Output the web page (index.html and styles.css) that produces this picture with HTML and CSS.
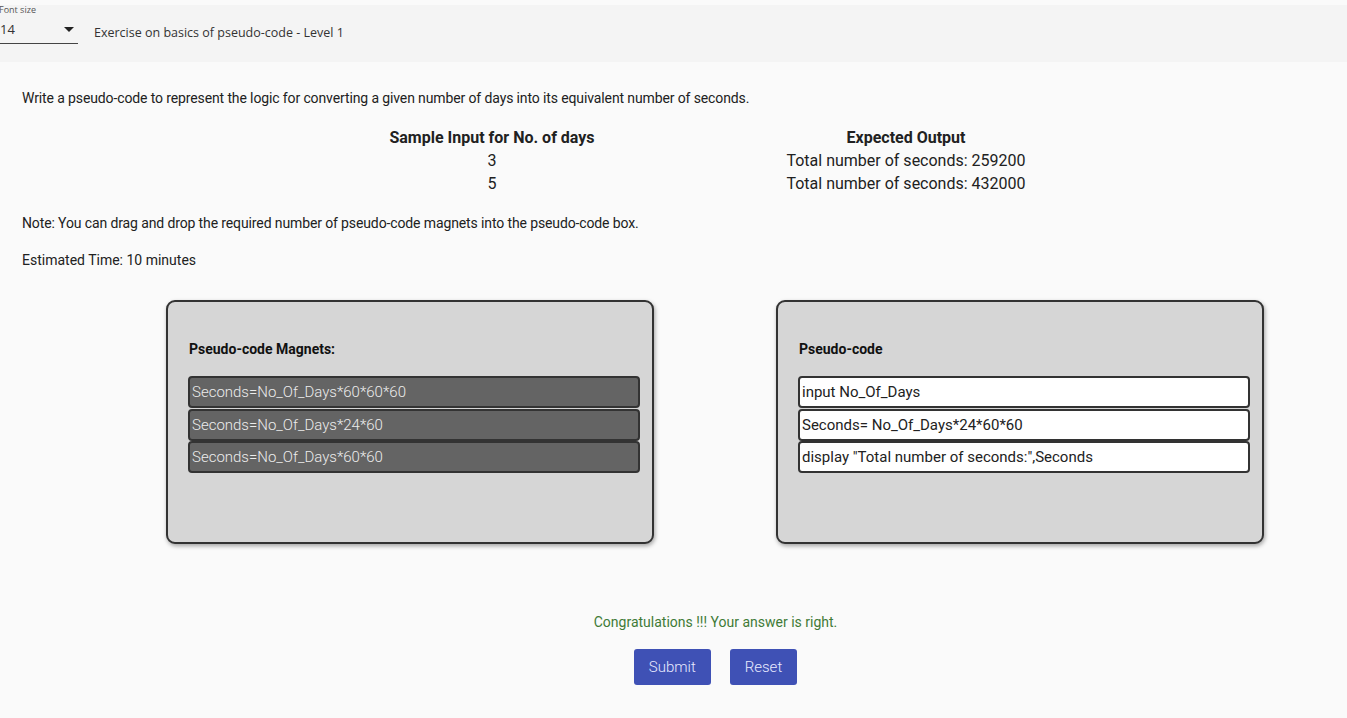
FILE: index.html
```html
<!DOCTYPE html>
<html>
<head>
<meta charset="utf-8">
<link rel="stylesheet" href="styles.css">
</head>
<body>
<header class="topbar">
  <div class="select">
    <span class="select-label">Font size</span>
    <div class="select-value">
      <span>14</span>
      <svg class="caret" width="12" height="6" viewBox="0 0 12 6"><path d="M1 0 L11 0 L6 5 Z" fill="#222"/></svg>
    </div>
  </div>
  <div class="title">Exercise on basics of pseudo-code - Level 1</div>
</header>
<main class="content">
  <p class="intro">Write a pseudo-code to represent the logic for converting a given number of days into its equivalent number of seconds.</p>
  <div class="sample">
    <div class="cell head">Sample Input for No. of days</div>
    <div class="cell head">Expected Output</div>
    <div class="cell">3</div>
    <div class="cell">Total number of seconds: 259200</div>
    <div class="cell">5</div>
    <div class="cell">Total number of seconds: 432000</div>
  </div>
  <p class="note">Note: You can drag and drop the required number of pseudo-code magnets into the pseudo-code box.</p>
  <p class="time">Estimated Time: 10 minutes</p>
  <div class="boxes">
    <section class="box">
      <h3 class="box-title">Pseudo-code Magnets:</h3>
      <div class="item magnet">Seconds=No_Of_Days*60*60*60</div>
      <div class="item magnet">Seconds=No_Of_Days*24*60</div>
      <div class="item magnet">Seconds=No_Of_Days*60*60</div>
    </section>
    <section class="box">
      <h3 class="box-title">Pseudo-code</h3>
      <div class="item code">input No_Of_Days</div>
      <div class="item code">Seconds= No_Of_Days*24*60*60</div>
      <div class="item code">display "Total number of seconds:",Seconds</div>
    </section>
  </div>
  <p class="result">Congratulations !!! Your answer is right.</p>
  <div class="actions">
    <button class="btn">Submit</button>
    <button class="btn">Reset</button>
  </div>
</main>
</body>
</html>
```
FILE: styles.css
```css
html, body {
  margin: 0;
  padding: 0;
  background: #fafafa;
  font-family: Roboto, "Liberation Sans", sans-serif;
  color: #212121;
}
.topbar {
  margin-top: 5px;
  height: 57px;
  background: #f4f4f4;
  display: flex;
  align-items: flex-start;
  box-sizing: border-box;
}
.select {
  width: 78px;
  display: flex;
  flex-direction: column;
  font-family: "Open Sans", "Noto Sans", sans-serif;
}
.select-label {
  font-size: 9px;
  line-height: 10px;
  margin-top: 0px;
  color: #555;
  margin-left: -1px;
}
.select-value {
  display: flex;
  justify-content: space-between;
  align-items: center;
  height: 24px;
  border-bottom: 1px solid #444;
  font-size: 13px;
  color: #333;
  padding-right: 3px;
  margin-top: 4px;
}
.select-value span { margin-top: -4px; }
.caret { margin-top: -2px; }
.title {
  font-family: "Open Sans", "Noto Sans", sans-serif;
  font-size: 12.5px;
  color: #333;
  margin-left: 16px;
  margin-top: 19px;
}
.content {
  padding: 0 22px;
}
.intro {
  margin: 27px 0 0;
  font-size: 14px;
  line-height: 18px;
  letter-spacing: -0.12px;
}
.sample {
  display: grid;
  grid-template-columns: 414px 414px;
  margin: 19px 0 0 263px;
  font-size: 16px;
  line-height: 23px;
}
.cell { text-align: center; }
.head { font-weight: 700; }
.note {
  margin: 19px 0 0;
  font-size: 14px;
  line-height: 18px;
  letter-spacing: -0.12px;
}
.time {
  margin: 19px 0 0;
  font-size: 14px;
  line-height: 18px;
}
.boxes {
  display: grid;
  grid-template-columns: 488px 488px;
  column-gap: 122px;
  margin: 31px 0 0 144px;
}
.box {
  height: 244px;
  box-sizing: border-box;
  border: 2px solid #333;
  border-radius: 9px;
  background: #d6d6d6;
  box-shadow: 1px 2px 4px rgba(0,0,0,0.35);
  padding: 37px 12px 0 20px;
}
.box-title {
  margin: 0 0 17px 1px;
  font-size: 14px;
  line-height: 20px;
  font-weight: 700;
  color: #111;
}
.item {
  height: 32px;
  box-sizing: border-box;
  border: 2px solid #333;
  border-radius: 4px;
  font-size: 15px;
  line-height: 28px;
  padding-left: 2px;
  margin-bottom: 0.5px;
  white-space: nowrap;
}
.magnet {
  background: #646464;
  color: #ececec;
  font-weight: 300;
}
.code {
  background: #fff;
  color: #222;
}
.result {
  margin: 69px 0 0 84px;
  text-align: center;
  color: #3f7a37;
  font-size: 14px;
  line-height: 18px;
}
.actions {
  display: flex;
  justify-content: center;
  gap: 19px;
  margin: 18px 0 0 84px;
}
.btn {
  height: 36px;
  padding: 0 15px;
  border: none;
  border-radius: 3px;
  background: #3f51b5;
  color: #e8eaff;
  font-family: Roboto, "Liberation Sans", sans-serif;
  font-size: 15px;
  font-weight: 300;
}
```
